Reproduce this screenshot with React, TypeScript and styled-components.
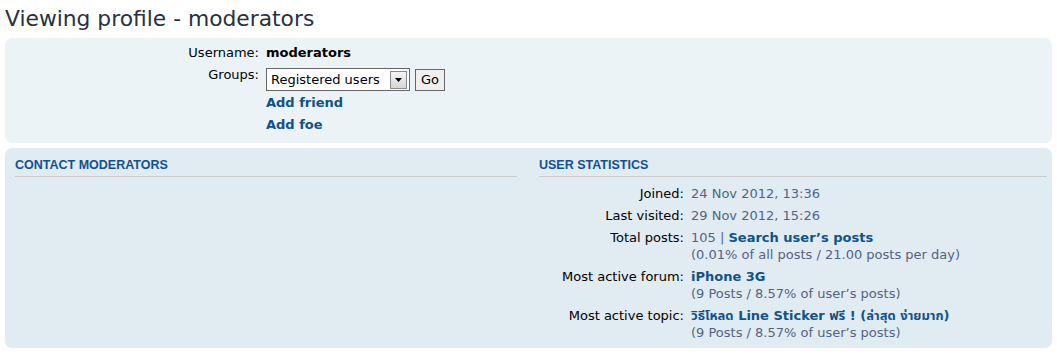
import React from 'react';
import styled, { createGlobalStyle } from 'styled-components';

const GlobalStyle = createGlobalStyle`
	html, body {
		margin: 0;
		padding: 0;
		background: #ffffff;
	}
	body {
		font-family: 'DejaVu Sans', Verdana, 'Noto Sans Thai', sans-serif;
		font-size: 13px;
		color: #536482;
	}
`;

const Page = styled.div`
	padding: 0 5px 10px 5px;
`;

const Title = styled.h2`
	margin: 0;
	padding: 6px 0 6px 0;
	font-family: 'DejaVu Sans', Verdana, sans-serif;
	font-weight: normal;
	font-size: 21.8px;
	line-height: 26px;
	color: #28313f;
`;

const Panel = styled.div<{ $tone: 'light' | 'dark' }>`
	background: ${(p) => (p.$tone === 'light' ? '#ECF3F7' : '#E1EBF2')};
	border-radius: 7px;
	padding: ${(p) => (p.$tone === 'light' ? '6px 10px 10px 10px' : '9px 5px 7px 10px')};
	margin-bottom: 5px;
`;

const Details = styled.dl<{ $labelWidth: string }>`
	margin: 0;
	display: grid;
	grid-template-columns: ${(p) => p.$labelWidth} 1fr;
	row-gap: 5px;
`;

const Term = styled.dt`
	margin: 0;
	padding-right: 7px;
	text-align: right;
	color: #000000;
	line-height: 17px;
`;

const Def = styled.dd`
	margin: 0;
	line-height: 17px;
	color: #536482;
`;

const Strong = styled.strong`
	color: #000000;
	font-weight: bold;
`;

const Link = styled.a`
	color: #105289;
	font-weight: bold;
	text-decoration: none;
	cursor: pointer;
`;

const LinkRow = styled.div<{ $first?: boolean }>`
	line-height: 17px;
	margin-top: ${(p) => (p.$first ? '0' : '5px')};
`;

const GroupForm = styled.div`
	display: flex;
	align-items: center;
	gap: 5px;
	margin: 2px 0 -2px 0;
`;

const Select = styled.div`
	display: flex;
	align-items: center;
	width: 138px;
	height: 21px;
	border: 1px solid #666666;
	background: #ffffff;
	color: #000000;
	padding-left: 4px;
	box-sizing: content-box;
`;

const SelectText = styled.span`
	flex: 1;
`;

const Arrow = styled.span`
	display: flex;
	align-items: center;
	justify-content: center;
	width: 15px;
	height: 16px;
	margin-right: 2px;
	border: 1px solid #8a8a8a;
	background: linear-gradient(#f6f6f6, #d6d6d6);
`;

const GoButton = styled.button`
	height: 22px;
	width: 30px;
	padding: 0;
	border: 1px solid #666666;
	background: #efefef;
	color: #000000;
	font-family: 'DejaVu Sans', Verdana, sans-serif;
	font-size: 13px;
`;

const Columns = styled.div`
	display: grid;
	grid-template-columns: 502px 1fr;
	column-gap: 22px;
`;

const BoxTitle = styled.h3`
	margin: 0 0 8px 0;
	padding-bottom: 2px;
	border-bottom: 1px solid #cccccc;
	font-family: 'Liberation Sans', Arial, sans-serif;
	font-size: 12.5px;
	font-weight: bold;
	line-height: 17px;
	text-transform: uppercase;
	color: #115098;
`;

const Thai = styled.span`
	font-family: 'DejaVu Sans', 'Noto Sans Thai', 'Noto Sans Thai UI', Loma, sans-serif;
`;

function App() {
	return (
		<Page>
			<GlobalStyle />
			<Title>Viewing profile - moderators</Title>
			<Panel $tone="light">
				<Details $labelWidth="251px">
					<Term>Username:</Term>
					<Def>
						<Strong>moderators</Strong>
					</Def>
					<Term>Groups:</Term>
					<Def>
						<GroupForm>
							<Select>
								<SelectText>Registered users</SelectText>
								<Arrow>
									<svg width="7" height="4" viewBox="0 0 7 4">
										<path d="M0 0 H7 L3.5 4 Z" fill="#000" />
									</svg>
								</Arrow>
							</Select>
							<GoButton>Go</GoButton>
						</GroupForm>
					</Def>
					<Term />
					<Def>
						<LinkRow $first>
							<Link>Add friend</Link>
						</LinkRow>
						<LinkRow>
							<Link>Add foe</Link>
						</LinkRow>
					</Def>
				</Details>
			</Panel>
			<Panel $tone="dark">
				<Columns>
					<div>
						<BoxTitle>Contact moderators</BoxTitle>
					</div>
					<div>
						<BoxTitle>User statistics</BoxTitle>
						<Details $labelWidth="152px">
							<Term>Joined:</Term>
							<Def>24 Nov 2012, 13:36</Def>
							<Term>Last visited:</Term>
							<Def>29 Nov 2012, 15:26</Def>
							<Term>Total posts:</Term>
							<Def>
								105 | <Link>Search user’s posts</Link>
								<br />
								(0.01% of all posts / 21.00 posts per day)
							</Def>
							<Term>Most active forum:</Term>
							<Def>
								<Link>iPhone 3G</Link>
								<br />
								(9 Posts / 8.57% of user’s posts)
							</Def>
							<Term>Most active topic:</Term>
							<Def>
								<Link>
									<Thai>วิธีโหลด Line Sticker ฟรี ! (ล่าสุด ง่ายมาก)</Thai>
								</Link>
								<br />
								(9 Posts / 8.57% of user’s posts)
							</Def>
						</Details>
					</div>
				</Columns>
			</Panel>
		</Page>
	);
}

export default App;
